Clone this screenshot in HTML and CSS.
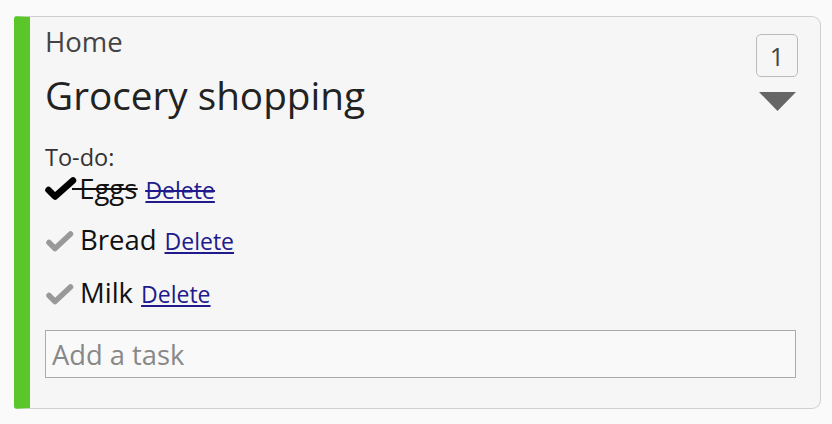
FILE: index.html
```html
<!DOCTYPE html>
<html>
<head>
<meta charset="utf-8">
<link rel="stylesheet" href="styles.css">
</head>
<body>
<div class="card">
  <div class="header">
    <div class="titles">
      <div class="category">Home</div>
      <h1 class="title">Grocery shopping</h1>
    </div>
    <div class="controls">
      <div class="badge">1</div>
      <svg class="caret" width="37" height="19" viewBox="0 0 37 19"><polygon points="0,0 37,0 18.5,19" fill="#666"/></svg>
    </div>
  </div>
  <div class="todo-label">To-do:</div>
  <ul class="tasks">
    <li class="task done">
      <svg class="check check-done" width="32" height="24" viewBox="0 0 32 24"><polyline points="3.5,13 10,19.5 28,3.5" fill="none" stroke="#000" stroke-width="6.5" stroke-linecap="round" stroke-linejoin="round"/></svg>
      <span class="name">&nbsp;Eggs</span> <a class="del" href="#">Delete</a>
    </li>
    <li class="task">
      <svg class="check" width="32" height="24" viewBox="0 0 32 24"><polyline points="4,12.5 10,18.5 25.5,4" fill="none" stroke="#999" stroke-width="5.5" stroke-linecap="round" stroke-linejoin="round"/></svg>
      <span class="name">Bread</span> <a class="del" href="#">Delete</a>
    </li>
    <li class="task">
      <svg class="check" width="32" height="24" viewBox="0 0 32 24"><polyline points="4,12.5 10,18.5 25.5,4" fill="none" stroke="#999" stroke-width="5.5" stroke-linecap="round" stroke-linejoin="round"/></svg>
      <span class="name">Milk</span> <a class="del" href="#">Delete</a>
    </li>
  </ul>
  <input class="add" type="text" placeholder="Add a task">
</div>
</body>
</html>
```
FILE: styles.css
```css
html, body {
  margin: 0;
  padding: 0;
  background: #fafafa;
  font-family: "Open Sans", "Liberation Sans", sans-serif;
}
.card {
  box-sizing: border-box;
  margin: 16px 0 0 14px;
  width: 807px;
  height: 393px;
  background: #f6f6f6;
  border: 1px solid #cfcfcf;
  border-left: 16px solid #5bc62a;
  border-radius: 3px 9px 9px 3px;
  padding: 6px 22px 0 15px;
}
.header {
  display: flex;
  justify-content: space-between;
  align-items: flex-start;
}
.category {
  font-size: 27.5px;
  line-height: 38px;
  color: #444;
}
.title {
  margin: 0;
  font-weight: normal;
  font-size: 38.7px;
  line-height: 68px;
  color: #222;
}
.controls {
  display: flex;
  flex-direction: column;
  align-items: center;
  padding-top: 11px;
}
.badge {
  box-sizing: border-box;
  width: 42px;
  height: 43px;
  border: 1px solid #bbb;
  border-radius: 5px;
  display: flex;
  align-items: center;
  justify-content: center;
  font-size: 25px;
  color: #444;
}
.caret {
  margin-top: 15px;
  display: block;
}
.todo-label {
  margin-top: 12px;
  font-size: 23.5px;
  line-height: 32px;
  color: #333;
}
.tasks {
  list-style: none;
  margin: 0;
  padding: 0;
}
.task {
  display: flex;
  align-items: baseline;
  line-height: 32px;
  height: 53px;
  font-size: 27.5px;
  color: #111;
}
.task:first-child {
  height: 51px;
}
.check {
  align-self: flex-start;
  margin-top: 6px;
  margin-right: 3px;
}
.check-done {
  margin-top: 4px;
  margin-right: -5px;
}
.task.done {
  text-decoration: line-through;
}
.task.done .name {
  text-decoration: line-through;
}
.name {
  margin-right: 8px;
}
.del {
  font-size: 23px;
  color: #201a8c;
  text-decoration: underline;
}
.task.done .del {
  text-decoration: underline line-through;
}
.add {
  display: block;
  box-sizing: border-box;
  width: 751px;
  height: 48px;
  border: 1px solid #aaa;
  background: #f9f9f9;
  font-family: "Open Sans", "Liberation Sans", sans-serif;
  font-size: 27.3px;
  padding: 0 6px;
  color: #333;
}
.add::placeholder {
  color: #888;
}
```
